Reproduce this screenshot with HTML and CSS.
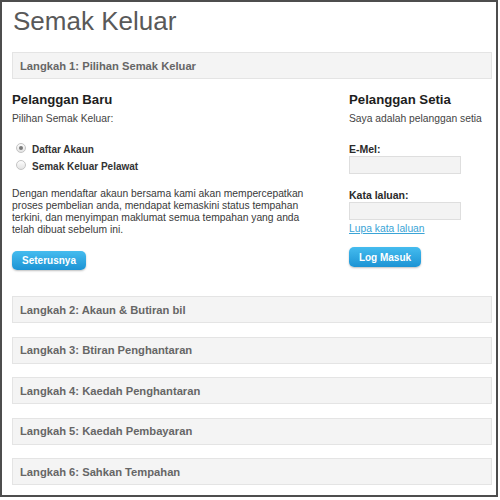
FILE: index.html
```html
<!DOCTYPE html>
<html lang="ms">
<head>
<meta charset="utf-8">
<title>Semak Keluar</title>
<link rel="stylesheet" href="styles.css">
</head>
<body>
<div class="frame">
  <h1 class="title">Semak Keluar</h1>
  <div class="step">Langkah 1: Pilihan Semak Keluar</div>
  <div class="cols">
    <div class="col-new">
      <h2 class="col-head">Pelanggan Baru</h2>
      <p class="sub">Pilihan Semak Keluar:</p>
      <label class="radio-row"><input type="radio" name="mode" class="radio" checked><span>Daftar Akaun</span></label>
      <label class="radio-row"><input type="radio" name="mode" class="radio"><span>Semak Keluar Pelawat</span></label>
      <p class="desc">Dengan mendaftar akaun bersama kami akan mempercepatkan proses pembelian anda, mendapat kemaskini status tempahan terkini, dan menyimpan maklumat semua tempahan yang anda telah dibuat sebelum ini.</p>
      <button class="btn btn-next" type="button">Seterusnya</button>
    </div>
    <div class="col-login">
      <h2 class="col-head">Pelanggan Setia</h2>
      <p class="sub">Saya adalah pelanggan setia</p>
      <label class="field-label field-email">E-Mel:</label>
      <input class="field" type="text">
      <label class="field-label field-pass">Kata laluan:</label>
      <input class="field" type="password">
      <a class="forgot" href="#">Lupa kata laluan</a>
      <button class="btn btn-login" type="button">Log Masuk</button>
    </div>
  </div>
  <div class="steps">
    <div class="step">Langkah 2: Akaun &amp; Butiran bil</div>
    <div class="step">Langkah 3: Btiran Penghantaran</div>
    <div class="step">Langkah 4: Kaedah Penghantaran</div>
    <div class="step">Langkah 5: Kaedah Pembayaran</div>
    <div class="step">Langkah 6: Sahkan Tempahan</div>
  </div>
</div>
</body>
</html>
```

FILE: styles.css
```css
* { box-sizing: border-box; }
html, body { margin: 0; padding: 0; background: #fff; }
body { font-family: "Liberation Sans", Arial, sans-serif; color: #333; }

.frame {
  width: 498px;
  height: 497px;
  border: 2px solid #4d4d4d;
  padding: 0 4px 0 10px;
  background: #fff;
  overflow: hidden;
}

.title {
  margin: 4px 0 16px 1px;
  font-size: 26px;
  line-height: 30px;
  font-weight: normal;
  color: #595959;
}

.step {
  height: 27px;
  background: #f4f4f4;
  border: 1px solid #e4e4e4;
  padding-left: 7px;
  display: flex;
  align-items: center;
  font-size: 11.2px;
  font-weight: bold;
  color: #666;
}

.cols {
  display: grid;
  grid-template-columns: 337px 1fr;
  margin-top: 13px;
  height: 204px;
}

.col-new, .col-login { display: flex; flex-direction: column; align-items: flex-start; }

.col-head {
  margin: 0;
  font-size: 13.2px;
  line-height: 16px;
  font-weight: bold;
  color: #1e1e1e;
}

.sub {
  margin: 4px 0 0;
  font-size: 10.3px;
  line-height: 13px;
  color: #444;
}

.radio-row {
  display: flex;
  align-items: center;
  height: 16.5px;
  font-size: 10px;
  font-weight: bold;
  color: #333;
}
.radio-row:first-of-type { margin-top: 15px; }
.radio-row span { margin-top: 3px; }

.radio {
  -webkit-appearance: none;
  appearance: none;
  width: 10px;
  height: 10px;
  margin: 0 6px 0 4px;
  border-radius: 50%;
  border: 1px solid #c4c4c4;
  background: linear-gradient(#fdfdfd, #e3e3e3);
  position: relative;
}
.radio:checked::after {
  content: "";
  position: absolute;
  left: 2px;
  top: 2px;
  width: 4px;
  height: 4px;
  border-radius: 50%;
  background: #7a7a7a;
}

.desc {
  margin: 15px 0 0;
  width: 312px;
  font-size: 10.3px;
  line-height: 12px;
  color: #3a3a3a;
}

.btn {
  border: 0;
  border-radius: 5px;
  background: linear-gradient(#45bcef, #1c93d4);
  box-shadow: 0 1px 2px rgba(0, 0, 0, 0.25);
  color: #fff;
  font-family: "Liberation Sans", Arial, sans-serif;
  font-weight: bold;
  font-size: 10px;
  height: 19px;
  padding: 0;
}
.btn-next { width: 74px; margin-top: 15px; }
.btn-login { width: 72px; height: 20px; margin-top: 12px; }

.field-label {
  display: block;
  font-size: 10.5px;
  line-height: 13px;
  font-weight: bold;
  color: #2a2a2a;
}
.field-email { margin-top: 18px; }
.field-pass { margin-top: 15px; }

.field {
  display: block;
  width: 112px;
  height: 18px;
  margin: 0;
  border: 1px solid #dedede;
  background: #f3f3f3;
}

.forgot {
  margin-top: 2px;
  font-size: 10.3px;
  line-height: 13px;
  color: #3aa4d6;
  text-decoration: underline;
}

.steps {
  display: flex;
  flex-direction: column;
  gap: 13.5px;
}
```
